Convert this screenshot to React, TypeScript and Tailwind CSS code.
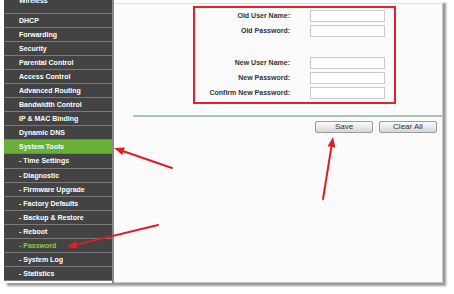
import React from 'react'

const menu = [
    'Wireless',
    'DHCP',
    'Forwarding',
    'Security',
    'Parental Control',
    'Access Control',
    'Advanced Routing',
    'Bandwidth Control',
    'IP & MAC Binding',
    'Dynamic DNS',
    'System Tools',
    '- Time Settings',
    '- Diagnostic',
    '- Firmware Upgrade',
    '- Factory Defaults',
    '- Backup & Restore',
    '- Reboot',
    '- Password',
    '- System Log',
    '- Statistics',
]

function Field({ label }: { label: string }) {
    return (
        <div className="flex items-center h-[15px]">
            <div className="w-[95px] text-right text-[7px] font-bold text-[#333] leading-none">{label}</div>
            <div className="ml-[20px] w-[75px] h-[12px] bg-white border border-[#c9c9c9]" />
        </div>
    )
}

function Button({ children }: { children: React.ReactNode }) {
    return (
        <button
            type="button"
            className="w-[58px] h-[12px] flex items-center justify-center rounded-[2px] border border-[#9d9d9d] bg-gradient-to-b from-[#fdfdfd] to-[#d6d6d6] text-[8px] leading-none text-[#333]"
        >
            {children}
        </button>
    )
}

export default function App() {
    return (
        <div className="relative w-[454px] h-[294px] bg-white overflow-hidden font-['Liberation_Sans',Arial,sans-serif]">
            <div className="ml-[4px] w-[439px] h-[283px] flex shadow-[3px_3px_2px_rgba(0,0,0,0.4)] bg-white">
                {/* Sidebar */}
                <div className="w-[110px] h-full border-r-2 border-[#8a8a8a] overflow-hidden bg-white">
                    <div className="-mt-[0.6px]">
                        {menu.map((item, i) => {
                            const active = item === 'System Tools'
                            const current = item === '- Password'
                            return (
                                <div
                                    key={item}
                                    className={`h-[14.1px] flex items-center pl-[15px] border-b border-[#7a7a7a] ${active ? 'bg-[#67b136]' : 'bg-[#434343]'}`}
                                >
                                    <span
                                        className={`text-[7px] font-bold leading-none ${current ? 'text-[#8fcb3f]' : 'text-white'} ${i === 0 ? 'mb-[10px]' : ''}`}
                                    >
                                        {item}
                                    </span>
                                </div>
                            )
                        })}
                    </div>
                </div>

                {/* Content */}
                <div className="flex-1 pt-[3px] flex flex-col bg-white">
                    <div className="flex-1 bg-[#fbfbfb] border-t border-[#d4e3ec] border-r border-b border-r-[#c4c4c4] border-b-[#c4c4c4]">
                        <div className="ml-[79px] mt-[2px] w-[203px] h-[98px] border-2 border-[#e3232b] pb-[2px]">
                            <Field label="Old User Name:" />
                            <Field label="Old Password:" />
                            <div className="h-[17px]" />
                            <Field label="New User Name:" />
                            <Field label="New Password:" />
                            <Field label="Confirm New Password:" />
                        </div>

                        <div className="ml-[19px] mt-[11px] h-[2px] bg-[#a4c9b0]" />

                        <div className="mt-[4px] pr-[5px] flex justify-end gap-[6px]">
                            <Button>Save</Button>
                            <Button>Clear All</Button>
                        </div>
                    </div>
                </div>
            </div>

            {/* annotation arrows */}
            <svg className="absolute inset-0 pointer-events-none" width="454" height="294" viewBox="0 0 454 294">
                <g stroke="#e31b23" strokeWidth="2" fill="#e31b23" strokeLinecap="round">
                    <line x1="172" y1="168" x2="123.5" y2="151.3" />
                    <polygon stroke="none" points="114,148 124.8,147.5 122.2,155.1" />
                    <line x1="158" y1="225" x2="76.7" y2="244.6" />
                    <polygon stroke="none" points="67,247 75.8,240.8 77.6,248.5" />
                    <line x1="323" y1="199" x2="331.4" y2="146.9" />
                    <polygon stroke="none" points="333,137 335.4,147.5 327.5,146.3" />
                </g>
            </svg>
        </div>
    )
}
